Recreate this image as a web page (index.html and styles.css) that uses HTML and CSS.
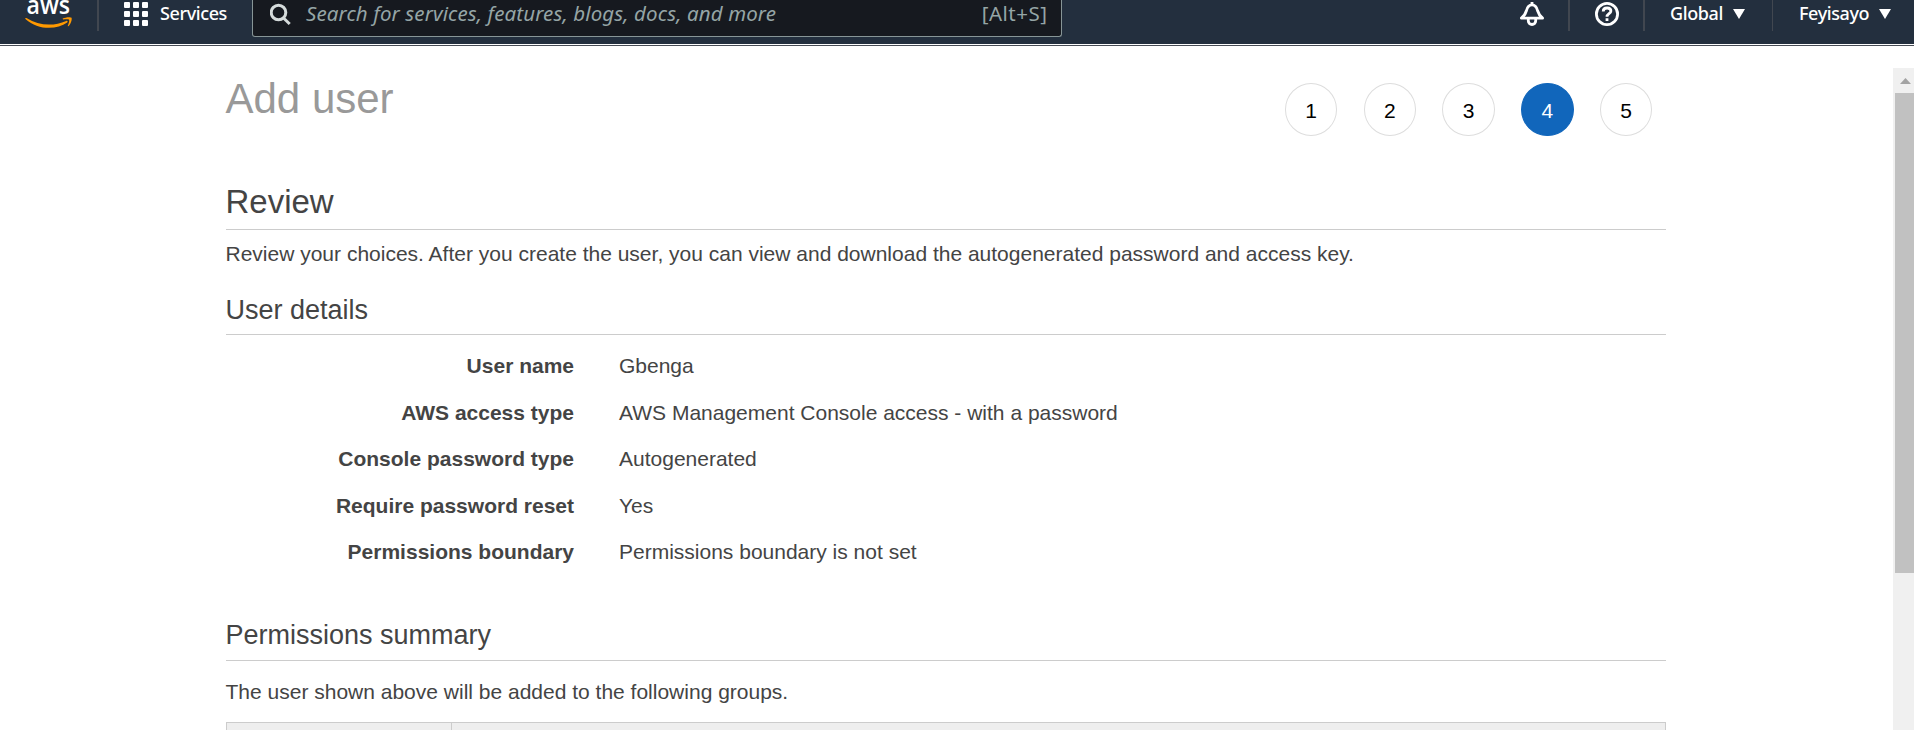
FILE: index.html
```html
<!DOCTYPE html>
<html lang="en">
<head>
<meta charset="utf-8">
<title>Add user</title>
<link rel="stylesheet" href="styles.css">
</head>
<body>
<header class="topbar">
  <div class="logo">
    <svg width="50" height="32" viewBox="0 0 50 32">
      <text class="logo-text" x="1.5" y="14" textLength="43.500" lengthAdjust="spacingAndGlyphs">aws</text>
      <path d="M.3 18.2c.4-.5 1-.3 1.6 0 11.500 7.300 26.500 8.400 39.300 2.700 1.200-.5 2 .7 1 1.500C31.500 30.300 12.500 30 .7 19.200c-.4-.4-.6-.7-.4-1z" fill="#f90"/>
      <path d="M37.800 18.600c2.200-1.500 8-2 8.700-.8.700 1.200-.4 6.300-2.900 8.300-.6.500-1 .2-.8-.4.700-1.600 1.900-5 1.300-5.900-.6-.8-4-.5-5.600-.3-.7.100-1.200-.5-.7-.9z" fill="#f90"/>
    </svg>
  </div>
  <div class="services">
    <svg width="24" height="26" viewBox="0 0 24 26" fill="#fff">
      <rect x="0" y="2" width="6" height="6" rx="1"/><rect x="9" y="2" width="6" height="6" rx="1"/><rect x="18" y="2" width="6" height="6" rx="1"/>
      <rect x="0" y="11" width="6" height="6" rx="1"/><rect x="9" y="11" width="6" height="6" rx="1"/><rect x="18" y="11" width="6" height="6" rx="1"/>
      <rect x="0" y="20" width="6" height="6" rx="1"/><rect x="9" y="20" width="6" height="6" rx="1"/><rect x="18" y="20" width="6" height="6" rx="1"/>
    </svg>
    <span class="label services-label">Services</span>
  </div>
  <div class="search">
    <svg width="22" height="26" viewBox="0 0 22 26" fill="none" stroke="#d5dbdb" stroke-width="3">
      <circle cx="8.500" cy="12.500" r="7.300"/><path d="M13.500 18l6.200 6"/>
    </svg>
    <span class="placeholder">Search for services, features, blogs, docs, and more</span>
    <span class="shortcut">[Alt+S]</span>
  </div>
  <nav class="tools">
    <div class="tool bell">
      <svg width="24" height="26" viewBox="0 0 24 26" fill="none" stroke="#fff" stroke-width="2.800" stroke-linejoin="round">
        <path d="M1.400 18.200h21.200c-3-2.500-4.200-4.500-5.100-7.700C16.700 7 15 4.800 12 4.800S7.300 7 6.500 10.500c-.9 3.200-2.100 5.200-5.100 7.700z"/>
        <path d="M12 2v3M8.300 19v1.800a3.700 3.700 0 0 0 7.400 0V19"/>
      </svg>
    </div>
    <div class="tool help">
      <svg width="24" height="26" viewBox="0 0 24 26" fill="none" stroke="#fff" stroke-width="2.800">
        <circle cx="12" cy="14" r="10.600"/>
        <path d="M8.200 11.500c0-2.200 1.600-3.500 3.900-3.500 2.200 0 3.800 1.200 3.800 3.100 0 2.600-3.900 2.700-3.900 5.700M12 18.300v2.800"/>
      </svg>
    </div>
    <div class="tool region"><span class="label">Global</span><svg class="caret" width="12" height="10" viewBox="0 0 12 10"><path d="M0 0h12L6 10z" fill="#fff"/></svg></div>
    <div class="tool account"><span class="label">Feyisayo</span><svg class="caret" width="12" height="10" viewBox="0 0 12 10"><path d="M0 0h12L6 10z" fill="#fff"/></svg></div>
  </nav>
</header>
<div class="viewport">
  <main class="wizard">
    <div class="wizard-head">
      <h1>Add user</h1>
      <ol class="steps">
        <li>1</li><li>2</li><li>3</li><li class="current">4</li><li>5</li>
      </ol>
    </div>
    <h2>Review</h2>
    <p class="intro">Review your choices. After you create the user, you can view and download the autogenerated password and access key.</p>
    <h3>User details</h3>
    <dl class="details">
      <dt>User name</dt><dd>Gbenga</dd>
      <dt>AWS access type</dt><dd>AWS Management Console access - with a password</dd>
      <dt>Console password type</dt><dd>Autogenerated</dd>
      <dt>Require password reset</dt><dd>Yes</dd>
      <dt>Permissions boundary</dt><dd>Permissions boundary is not set</dd>
    </dl>
    <h3 class="summary">Permissions summary</h3>
    <p class="groups">The user shown above will be added to the following groups.</p>
    <div class="table-head"><div></div><div></div></div>
  </main>
  <div class="scrollbar">
    <div class="scroll-up"><svg width="11" height="6" viewBox="0 0 11 6"><path d="M0 6L5.500 0 11 6z" fill="#a3a3a3"/></svg></div>
    <div class="thumb"></div>
  </div>
</div>
</body>
</html>
```
FILE: styles.css
```css
* { box-sizing: border-box; margin: 0; padding: 0; }
body {
  height: 730px;
  overflow: hidden;
  background: #fff;
  color: #444;
  font: 21px/30px "Liberation Sans", Arial, sans-serif;
}
svg { display: block; flex: none; }

.topbar {
  display: flex;
  align-items: flex-start;
  height: 44px;
  background: #232f3e;
  color: #fff;
  font-family: "Noto Sans", "Open Sans", sans-serif;
  font-size: 18px;
  line-height: 27px;
}
.logo { width: 99px; height: 31px; padding-left: 25px; border-right: 2px solid #414750; }
.logo-text { font: 600 26px "Open Sans", sans-serif; fill: #fff; }
.services { display: flex; gap: 12px; width: 153px; padding-left: 25px; }
.label { font-weight: 500; letter-spacing: -0.4px; white-space: nowrap; }
.search {
  display: flex;
  width: 810px;
  height: 37px;
  padding: 0 13.5px 0 17px;
  border: 1px solid #879596;
  border-top: 0;
  border-radius: 0 0 3px 3px;
  background: #16191f;
  color: #95a5a6;
  font-size: 20.5px;
}
.placeholder { flex: 1; margin-left: 14px; font-style: italic; letter-spacing: 0.12px; white-space: nowrap; }
.shortcut { letter-spacing: 0.5px; }
.tools { display: flex; margin-left: auto; }
.tool { display: flex; height: 31px; border-right: 2px solid #414750; }
.bell { width: 50px; }
.help { width: 75px; padding-left: 25px; }
.region { width: 128px; padding-left: 25px; border-right-width: 1px; }
.account { width: 141px; padding-left: 26px; border-right: 0; }
.caret { margin: 9px 0 0 10px; }
.account .caret { margin-left: 9.5px; }

.viewport { display: flex; justify-content: space-between; height: 685px; margin-top: 1px; border-top: 1px solid #474c55; }
.wizard { width: 1440.5px; margin-left: 225.5px; padding-top: 27px; }
.wizard-head { display: flex; justify-content: space-between; height: 109px; }
h1 { padding-top: 1px; font-size: 42px; line-height: 50px; font-weight: 400; color: #999; }
.steps { display: flex; gap: 26.25px; list-style: none; padding: 10px 13.75px 0 0; }
.steps li {
  width: 52.5px;
  height: 53px;
  border: 1px solid #ddd;
  border-radius: 50%;
  color: #000;
  line-height: 53px;
  text-align: center;
}
.steps .current { border-color: #1166bb; background: #1166bb; color: #fff; }
h2, h3 { font-weight: 400; border-bottom: 1px solid #ccc; }
h2 { height: 48px; font-size: 33px; line-height: 40px; }
h3 { height: 42px; font-size: 27px; line-height: 34px; }
.intro { margin: 9px 0 24px; }
.details { display: grid; grid-template-columns: 348.5px 1fr; column-gap: 45px; grid-template-rows: 47px 46px 47px 46px 46px; margin: 8px 0 43px; line-height: 46px; }
dt { font-weight: 700; text-align: right; }
.summary { height: 43px; }
.groups { margin: 16px 0 15px; }
.table-head { display: grid; grid-template-columns: 225px 1fr; height: 8px; border: 1px solid #ccc; border-bottom: 0; background: #eee; }
.table-head div:first-child { border-right: 1px solid #ccc; }
.scrollbar { width: 21px; margin-top: 22px; padding-left: 2px; background: #f0f0f0; }
.scroll-up { height: 25px; padding: 10px 0 0 5px; }
.thumb { height: 480px; background: #c1c1c1; }
```
